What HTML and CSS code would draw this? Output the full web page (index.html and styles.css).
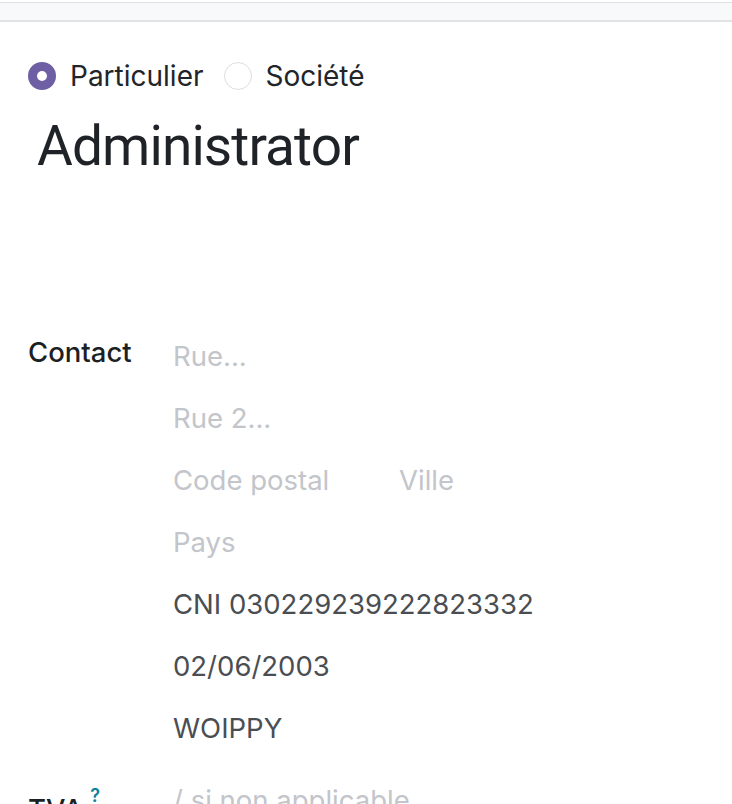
FILE: index.html
```html
<!DOCTYPE html>
<html>
    <head>
        <meta charset="utf-8" />
        <title>Administrator</title>
        <link rel="stylesheet" href="styles.css">
    </head>
    <body>
        <div class="o-topbar"></div>
        <div class="o-sheet">
            <div class="o-radios">
                <label class="o-radio">
                    <span class="dot checked"></span>
                    <span>Particulier</span>
                </label>
                <label class="o-radio">
                    <span class="dot"></span>
                    <span>Société</span>
                </label>
            </div>
            <h1 class="o-name">Administrator</h1>

            <div class="o-group o-first">
                <div class="o-label">Contact</div>
                <div class="o-fields">
                    <div class="o-field ph">Rue...</div>
                    <div class="o-field ph">Rue 2...</div>
                    <div class="o-field o-split">
                        <span class="ph zip">Code postal</span>
                        <span class="ph">Ville</span>
                    </div>
                    <div class="o-field ph">Pays</div>
                    <div class="o-field">CNI 030229239222823332</div>
                    <div class="o-field">02/06/2003</div>
                    <div class="o-field">WOIPPY</div>
                </div>
            </div>

            <div class="o-group">
                <div class="o-label">TVA <sup class="help">?</sup></div>
                <div class="o-fields">
                    <div class="o-field ph">/ si non applicable</div>
                </div>
            </div>
        </div>
    </body>
</html>
```

FILE: styles.css
```css
* {
    margin: 0;
    padding: 0;
    box-sizing: border-box;
}
body {
    font-family: Inter, "Noto Sans", sans-serif;
    color: #212529;
    background: #fff;
    overflow: hidden;
}

.o-topbar {
    margin-top: 2px;
    height: 20px;
    background: #f8f9fb;
    border-top: 1px solid #dfe1e5;
    border-bottom: 2px solid #e1e3e7;
}

.o-sheet {
    padding: 38px 0 0 28px;
}

.o-radios {
    display: flex;
    align-items: center;
    gap: 20px;
    font-size: 28px;
    line-height: 32px;
}
.o-radio {
    display: flex;
    align-items: center;
    gap: 14px;
}
.o-radio .dot {
    width: 28px;
    height: 28px;
    border-radius: 50%;
    border: 1.5px solid #dcdee2;
    background: #fff;
}
.o-radio .dot.checked {
    border: 9px solid #6e5fa4;
}

.o-name {
    margin: 23px 0 0 9px;
    font-family: Roboto, "Noto Sans", sans-serif;
    font-size: 55px;
    font-weight: 400;
    letter-spacing: -0.9px;
    line-height: 62px;
    color: #1f2327;
}

.o-group {
    display: flex;
    margin-top: 10px;
}
.o-group.o-first {
    margin-top: 158px;
}
.o-label {
    width: 145px;
    font-size: 27.5px;
    font-weight: 500;
    line-height: 34px;
    color: #1c1f23;
}
.o-fields {
    flex: 1;
}
.o-field {
    font-size: 27.5px;
    line-height: 42px;
    height: 62px;
    color: #4a4e53;
}
.o-split {
    display: flex;
}
.o-split .zip {
    width: 226px;
}
.ph {
    color: #c2c5ca;
}
.help {
    font-size: 18px;
    font-weight: 600;
    color: #0f7f9a;
    vertical-align: 17px;
}
```
